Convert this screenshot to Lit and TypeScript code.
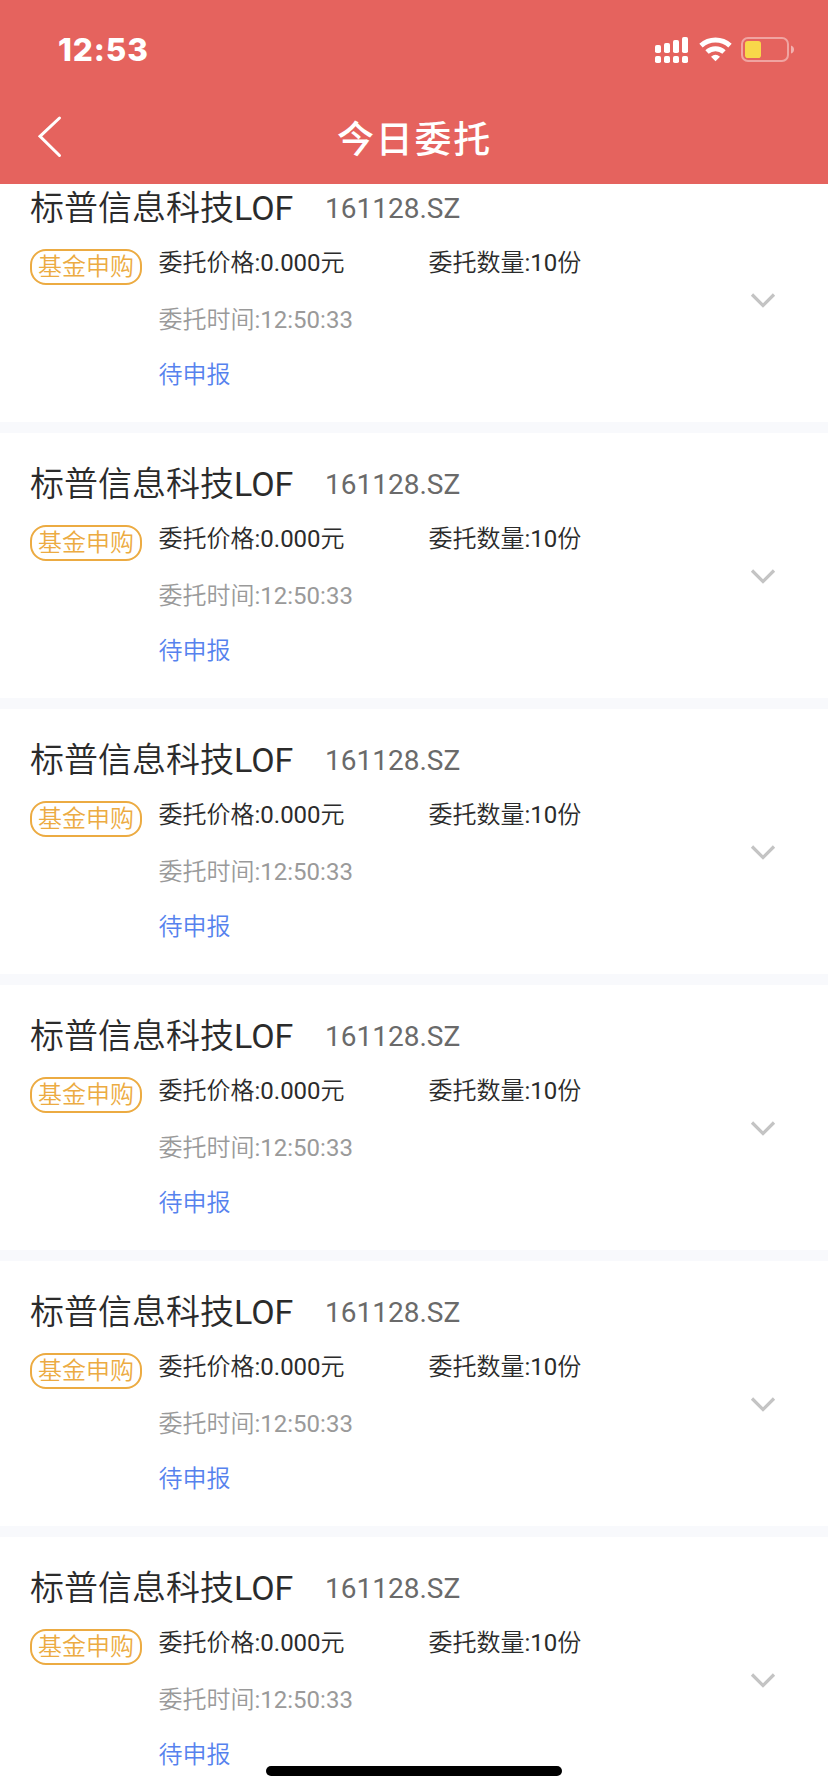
import { LitElement, html, css, svg } from "lit";
import { customElement, property } from "lit/decorators.js";

interface Order {
  name: string;
  code: string;
  kind: string;
  price: string;
  amount: string;
  time: string;
  status: string;
}

const orders: Order[] = Array.from({ length: 6 }, () => ({
  name: "标普信息科技LOF",
  code: "161128.SZ",
  kind: "基金申购",
  price: "0.000元",
  amount: "10份",
  time: "12:50:33",
  status: "待申报",
}));

@customElement("order-card")
export class OrderCard extends LitElement {
  @property({ attribute: false }) order!: Order;

  static styles = css`
    :host {
      display: block;
      flex: none;
      height: 265px;
      background: #fff;
      border-bottom: 11px solid #f8f9fc;
    }
    .card {
      box-sizing: border-box;
      height: 265px;
      padding: 31px 30px 0;
      white-space: nowrap;
    }
    .head {
      display: flex;
      align-items: center;
      height: 40px;
    }
    .name {
      width: 295px;
      font-size: 34px;
      line-height: 40px;
      color: #2b2b2b;
    }
    .code {
      padding-top: 1px;
      font-size: 28px;
      line-height: 40px;
      color: #6a6a6a;
    }
    .body {
      display: grid;
      grid-template-columns: 112px 1fr 53px;
      column-gap: 16px;
      margin-top: 17px;
    }
    .tag {
      box-sizing: border-box;
      width: 112px;
      height: 36px;
      margin-top: 4px;
      border: 2px solid #ecab42;
      border-radius: 16px;
      font-size: 24px;
      line-height: 33px;
      text-align: center;
      color: #ecab42;
    }
    .lines {
      display: flex;
      flex-direction: column;
      padding: 1px 0 0 0.5px;
      font-size: 24px;
      line-height: 34px;
    }
    .pair {
      display: grid;
      grid-template-columns: 270px auto;
      color: #2b2b2b;
    }
    .time {
      margin-top: 23px;
      color: #9a9a9a;
    }
    .status {
      margin-top: 21px;
      color: #5682ee;
    }
    .chevron {
      width: 28px;
      height: 20px;
      margin: 46px 0 0 4px;
    }
  `;

  render() {
    const o = this.order;
    return html`
      <article class="card">
        <div class="head">
          <span class="name">${o.name}</span>
          <span class="code">${o.code}</span>
        </div>
        <div class="body">
          <div class="tag">${o.kind}</div>
          <div class="lines">
            <div class="pair">
              <span>委托价格:${o.price}</span>
              <span>委托数量:${o.amount}</span>
            </div>
            <div class="time">委托时间:${o.time}</div>
            <div class="status">${o.status}</div>
          </div>
          <svg class="chevron" viewBox="0 0 28 20">
            <path d="M3 3.5 L14 14.5 L25 3.5" fill="none" stroke="#c4c4c4" stroke-width="3.2" />
          </svg>
        </div>
      </article>
    `;
  }
}

const signalBars = [8, 10, 13, 16];

@customElement("app-root")
export class AppRoot extends LitElement {
  static styles = css`
    :host {
      display: flex;
      flex-direction: column;
      position: relative;
      width: 828px;
      height: 1792px;
      overflow: hidden;
      background: #fff;
      font-family: Roboto, "Noto Sans CJK SC DemiLight", "Noto Sans CJK SC", sans-serif;
    }
    .header {
      flex: none;
      height: 184px;
      background: #e5635e;
      color: #fff;
      z-index: 1;
    }
    .statusbar {
      display: flex;
      justify-content: space-between;
      height: 96px;
    }
    .clock {
      padding: 31px 0 0 58px;
      font: 800 31.5px/38px Inter, sans-serif;
      letter-spacing: 0.9px;
    }
    .icons {
      width: 148px;
      height: 36px;
      margin: 32px 30px 0 0;
    }
    .nav {
      display: grid;
      grid-template-columns: 96px 1fr 96px;
      height: 88px;
    }
    .back {
      width: 30px;
      height: 48px;
      margin: 16px 0 0 34px;
    }
    .title {
      margin: 0;
      font-family: "Noto Sans CJK SC", sans-serif;
      font-size: 37px;
      font-weight: 500;
      line-height: 48px;
      letter-spacing: 1.7px;
      padding: 17px 0 0 1px;
      text-align: center;
    }
    .list {
      display: flex;
      flex-direction: column;
      flex: 1;
      min-height: 0;
      margin-top: -27px;
      overflow: hidden;
    }
    .home {
      position: absolute;
      left: 266px;
      bottom: 16px;
      width: 296px;
      height: 10px;
      border-radius: 5px;
      background: #000;
    }
  `;

  render() {
    return html`
      <header class="header">
        <div class="statusbar">
          <span class="clock">12:53</span>
          <svg class="icons" viewBox="650 32 148 36">
            ${signalBars.map(
              (h, i) => svg`
                <rect x=${655 + i * 9} y=${53 - h} width="6" height=${h} rx="1.8" fill="#fff" />
                <rect x=${655 + i * 9} y="56" width="6" height="7" rx="1.8" fill="#fff" />`
            )}
            <g fill="none" stroke="#fff" stroke-width="5">
              <path d="M701 45.7 A21.6 21.6 0 0 1 730 45.7" />
              <path d="M707 52 A12.7 12.7 0 0 1 724 52" />
            </g>
            <path d="M711 56.8 Q715.5 52.6 720 56.8 L715.5 61.3 Z" fill="#fff" />
            <rect x="742" y="38" width="46" height="23" rx="6" fill="none"
              stroke="#fff" stroke-opacity="0.42" stroke-width="2" />
            <rect x="745" y="41" width="16" height="17" rx="2.8" fill="#f8d84a" />
            <path d="M791 45.5 Q794 46.5 794 49.5 Q794 52.5 791 53.5 Z" fill="#fff" fill-opacity="0.5" />
          </svg>
        </div>
        <nav class="nav">
          <svg class="back" viewBox="34 112 30 48">
            <path d="M59.5 118 L40 136.3 L59.5 155.5" fill="none" stroke="#fff"
              stroke-width="3" stroke-linecap="round" stroke-linejoin="miter" />
          </svg>
          <h1 class="title">今日委托</h1>
        </nav>
      </header>
      <main class="list">
        ${orders.map((o) => html`<order-card .order=${o}></order-card>`)}
      </main>
      <div class="home"></div>
    `;
  }
}
